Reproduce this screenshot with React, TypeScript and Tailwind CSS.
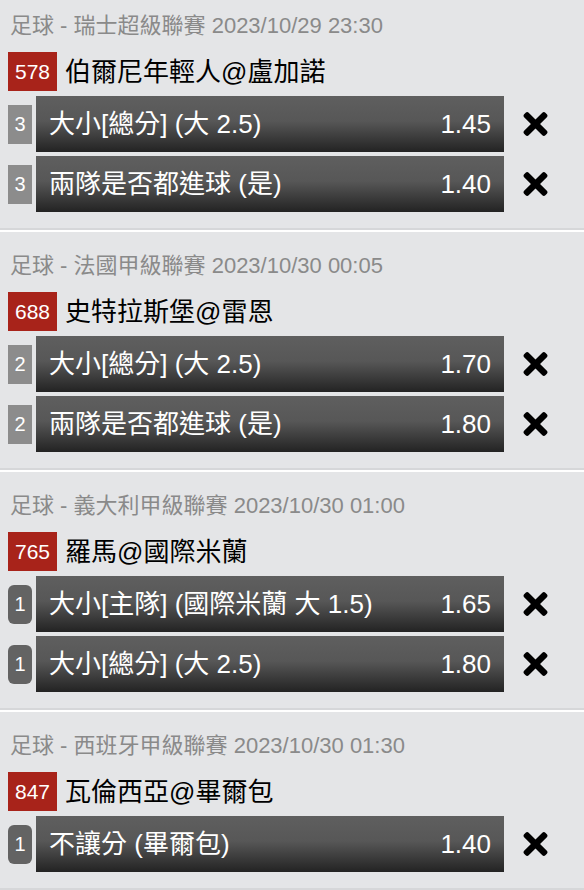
import React from "react";

type Bet = { n: string; rounded?: boolean; label: string; odds: string };
type Match = { header: string; code: string; teams: string; bets: Bet[] };

const data: Match[] = [
  {
    header: "足球 - 瑞士超級聯賽 2023/10/29 23:30",
    code: "578",
    teams: "伯爾尼年輕人@盧加諾",
    bets: [
      { n: "3", label: "大小[總分] (大 2.5)", odds: "1.45" },
      { n: "3", label: "兩隊是否都進球 (是)", odds: "1.40" },
    ],
  },
  {
    header: "足球 - 法國甲級聯賽 2023/10/30 00:05",
    code: "688",
    teams: "史特拉斯堡@雷恩",
    bets: [
      { n: "2", label: "大小[總分] (大 2.5)", odds: "1.70" },
      { n: "2", label: "兩隊是否都進球 (是)", odds: "1.80" },
    ],
  },
  {
    header: "足球 - 義大利甲級聯賽 2023/10/30 01:00",
    code: "765",
    teams: "羅馬@國際米蘭",
    bets: [
      { n: "1", rounded: true, label: "大小[主隊] (國際米蘭 大 1.5)", odds: "1.65" },
      { n: "1", rounded: true, label: "大小[總分] (大 2.5)", odds: "1.80" },
    ],
  },
  {
    header: "足球 - 西班牙甲級聯賽 2023/10/30 01:30",
    code: "847",
    teams: "瓦倫西亞@畢爾包",
    bets: [{ n: "1", rounded: true, label: "不讓分 (畢爾包)", odds: "1.40" }],
  },
];

const font = { fontFamily: '"Liberation Sans", "Noto Sans CJK TC", sans-serif' };

function XIcon() {
  return (
    <svg width="25" height="24" viewBox="0 80 352 352" fill="#000">
      <path d="M242.72 256l100.07-100.07c12.28-12.28 12.28-32.19 0-44.48l-22.24-22.24c-12.28-12.28-32.19-12.28-44.48 0L176 189.28 75.93 89.21c-12.28-12.28-32.19-12.28-44.48 0L9.21 111.45c-12.28 12.28-12.28 32.19 0 44.48L109.28 256 9.21 356.07c-12.28 12.28-12.28 32.19 0 44.48l22.24 22.24c12.28 12.28 32.2 12.28 44.48 0L176 322.72l100.07 100.07c12.28 12.28 32.19 12.28 44.48 0l22.24-22.24c12.28-12.28 12.28-32.19 0-44.48L242.72 256z" />
    </svg>
  );
}

function Section({ m, first }: { m: Match; first?: boolean }) {
  return (
    <div className={`${first ? "pt-[13px]" : "pt-[21px]"} pb-[16px] border-b-2 border-[#d6d7d9]`}>
      <div className="pl-[10px] text-[22px] leading-[26px] text-[#8a8a8a] whitespace-nowrap">{m.header}</div>
      <div className="mt-[13px] flex items-center pl-[8px]">
        <div className="h-[39px] px-[7px] flex items-center bg-[#a8231a] text-white text-[21px]">{m.code}</div>
        <div className="ml-[8px] text-[26px] leading-[30px] text-black whitespace-nowrap">{m.teams}</div>
      </div>
      <div className="mt-[5px] flex flex-col gap-[4px]">
        {m.bets.map((b, i) => (
          <div key={i} className="flex items-center pl-[8px]">
            <div
              className={`w-[24px] h-[39px] flex items-center justify-center text-white text-[20px] ${
                b.rounded ? "bg-[#636363] rounded-[6px]" : "bg-[#8c8c8c]"
              }`}
            >
              {b.n}
            </div>
            <div className="ml-[4px] w-[468px] h-[56px] flex items-center justify-between px-[13px] text-white text-[26px] bg-[linear-gradient(to_bottom,#5f5f5f_0%,#575757_45%,#232323_100%)]">
              <span className="whitespace-nowrap">{b.label}</span>
              <span>{b.odds}</span>
            </div>
            <div className="ml-[19px] flex items-center">
              <XIcon />
            </div>
          </div>
        ))}
      </div>
    </div>
  );
}

export default function App() {
  return (
    <div className="w-[584px] h-[890px] overflow-hidden bg-[#e4e5e7]" style={font}>
      {data.map((m, i) => (
        <div key={i} className="border-b-2 border-white">
          <Section m={m} first={i === 0} />
        </div>
      ))}
    </div>
  );
}
